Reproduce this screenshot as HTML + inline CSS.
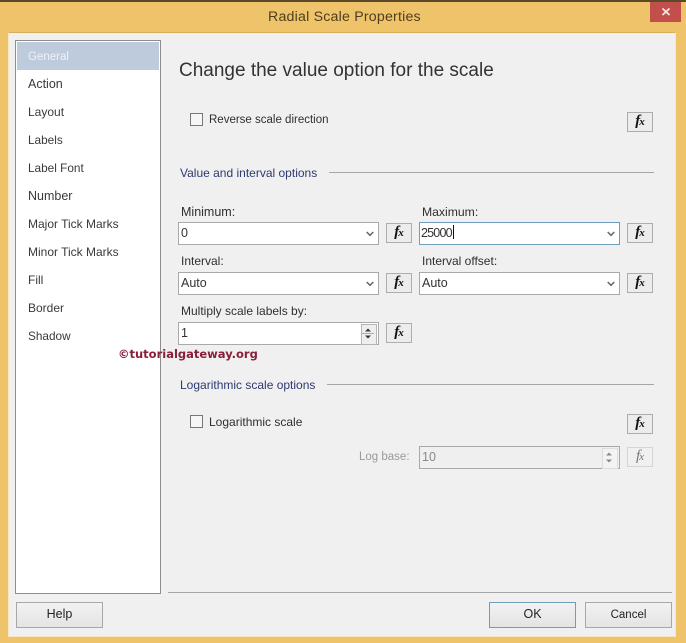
<!DOCTYPE html>
<html><head><meta charset="utf-8">
<style>
html,body{margin:0;padding:0}
body{width:686px;height:643px;position:relative;overflow:hidden;background:#efc369;font-family:"Liberation Sans",sans-serif;font-size:12px;color:#2f2f2f}
div,span.a{position:absolute;box-sizing:border-box;white-space:nowrap}
.t{line-height:16px;height:16px}
.li{left:28px;line-height:16px;height:16px;color:#3a3a3a;font-size:12px}
.f{background:#fff;border:1px solid #a9a9a9;height:23px;line-height:20px;padding-left:2px;color:#333;font-size:12.5px}
.arr{position:absolute;top:8px;right:4px;width:8px;height:6px}
.fx{width:26px;height:20px;background:#ececec;border:1px solid #adadad;font-family:"Liberation Serif",serif;font-style:italic;font-weight:bold;font-size:15px;line-height:17px;text-align:center;color:#111;letter-spacing:-1px;padding-right:1px}
.fx span{font-size:11px}
.spin{position:absolute;right:1px;top:1px;width:14px;height:19px;border:1px solid #b5b5b5;background:#eee}
.sec{color:#2e3a70;font-size:12px}
.btn{height:26px;background:linear-gradient(#f2f2f2,#e4e4e4);border:1px solid #a8a8a8;text-align:center;line-height:23px;color:#222;font-size:12.5px}
.ln{height:1px;background:#a5a5a5}
.cb{width:13px;height:13px;border:1px solid #777;background:#f6f6f6}
</style></head><body>
<div style="left:0;top:0;width:686px;height:2px;background:#5b4a2a"></div>
<div style="left:268px;top:9px;font-size:14.2px;color:#4f3e1f;line-height:17px;letter-spacing:.2px">Radial Scale Properties</div>
<div style="left:650px;top:2px;width:31px;height:20px;background:#c24f4b"></div>
<svg style="position:absolute;left:660px;top:7px" width="12" height="10"><path d="M2.5 1.5L9.5 8M9.5 1.5L2.5 8" stroke="#f5e6e0" stroke-width="1.8"/></svg>
<div style="left:8px;top:32px;width:668px;height:605px;background:#f0f0f0;border:1px solid #f7e6c4;border-top-color:#d9ad5a"></div>

<div style="left:15px;top:40px;width:146px;height:554px;background:#fff;border:1px solid #8d8d8d"></div>
<div style="left:17px;top:42px;width:142px;height:28px;background:#bdcbdc"></div>
<div class="li" style="top:49px;color:#eef2f6;font-size:11.5px">General</div>
<div class="li" style="top:76px;font-size:12.5px">Action</div>
<div class="li" style="top:104px">Layout</div>
<div class="li" style="top:132px;font-size:11.8px">Labels</div>
<div class="li" style="top:160px;font-size:11.8px">Label Font</div>
<div class="li" style="top:188px;font-size:12.5px">Number</div>
<div class="li" style="top:216px">Major Tick Marks</div>
<div class="li" style="top:244px">Minor Tick Marks</div>
<div class="li" style="top:272px">Fill</div>
<div class="li" style="top:300px">Border</div>
<div class="li" style="top:328px;font-size:11.8px">Shadow</div>

<div class="t" style="left:179px;top:59px;height:24px;line-height:24px;font-size:19px;color:#333">Change the value option for the scale</div>

<div class="cb" style="left:190px;top:113px"></div>
<div class="t" style="left:209px;top:112px;font-size:11.5px">Reverse scale direction</div>
<div class="fx" style="left:627px;top:112px"><i>f</i><span>x</span></div>

<div class="t sec" style="left:180px;top:165px">Value and interval options</div>
<div class="ln" style="left:329px;top:172px;width:325px"></div>

<div class="t" style="left:181px;top:204px;font-size:12.5px">Minimum:</div>
<div class="f" style="left:178px;top:222px;width:201px">0<svg class="arr" viewBox="0 0 8 6"><path d="M.7 1L4 4.3L7.3 1" fill="none" stroke="#666" stroke-width="1.5"/></svg></div>
<div class="fx" style="left:386px;top:223px"><i>f</i><span>x</span></div>
<div class="t" style="left:422px;top:204px;font-size:12.2px">Maximum:</div>
<div class="f" style="left:419px;top:222px;width:201px;border-color:#6f9dbd;padding-left:1px;letter-spacing:-.8px">25000<span style="display:inline-block;width:1px;height:14px;background:#111;vertical-align:-2px;margin-left:1px"></span><svg class="arr" viewBox="0 0 8 6"><path d="M.7 1L4 4.3L7.3 1" fill="none" stroke="#666" stroke-width="1.5"/></svg></div>
<div class="fx" style="left:627px;top:223px"><i>f</i><span>x</span></div>

<div class="t" style="left:181px;top:253px">Interval:</div>
<div class="f" style="left:178px;top:272px;width:201px">Auto<svg class="arr" viewBox="0 0 8 6"><path d="M.7 1L4 4.3L7.3 1" fill="none" stroke="#666" stroke-width="1.5"/></svg></div>
<div class="fx" style="left:386px;top:273px"><i>f</i><span>x</span></div>
<div class="t" style="left:422px;top:253px">Interval offset:</div>
<div class="f" style="left:419px;top:272px;width:201px">Auto<svg class="arr" viewBox="0 0 8 6"><path d="M.7 1L4 4.3L7.3 1" fill="none" stroke="#666" stroke-width="1.5"/></svg></div>
<div class="fx" style="left:627px;top:273px"><i>f</i><span>x</span></div>

<div class="t" style="left:181px;top:303px">Multiply scale labels by:</div>
<div class="f" style="left:178px;top:322px;width:201px">1<span class="spin"><svg style="position:absolute;left:0;top:0" width="12" height="17"><path d="M3 6.5L6 3.5L9 6.5ZM3 10.5L6 13.5L9 10.5Z" fill="#333"/><path d="M0 8.5H12" stroke="#aaa"/></svg></span></div>
<div class="fx" style="left:386px;top:323px"><i>f</i><span>x</span></div>

<div class="t" style="left:118px;top:346px;font-family:'DejaVu Sans',sans-serif;font-weight:bold;font-size:11.5px;color:#8a1f3a">©tutorialgateway.org</div>

<div class="t sec" style="left:180px;top:377px">Logarithmic scale options</div>
<div class="ln" style="left:327px;top:384px;width:327px"></div>

<div class="cb" style="left:190px;top:415px"></div>
<div class="t" style="left:209px;top:414px">Logarithmic scale</div>
<div class="fx" style="left:627px;top:414px"><i>f</i><span>x</span></div>

<div class="t" style="left:359px;top:449px;color:#9a9a9a;font-size:11.5px">Log base:</div>
<div class="f" style="left:419px;top:446px;width:201px;background:#efefef;border-color:#a9a9a9;color:#888">10<span class="spin" style="border-color:#ddd;background:#f3f3f3"><svg style="position:absolute;left:0;top:0" width="12" height="17"><path d="M3 6.5L6 3.5L9 6.5ZM3 10.5L6 13.5L9 10.5Z" fill="#888"/></svg></span></div>
<div class="fx" style="left:627px;top:447px;border-color:#d5d5d5;background:#f0f0f0;color:#777;font-weight:normal"><i>f</i><span>x</span></div>

<div class="ln" style="left:168px;top:592px;width:504px"></div>
<div class="btn" style="left:16px;top:602px;width:87px">Help</div>
<div class="btn" style="left:489px;top:602px;width:87px;border-color:#6f9dbd">OK</div>
<div class="btn" style="left:585px;top:602px;width:87px;font-size:11.5px;line-height:24px">Cancel</div>
</body></html>
